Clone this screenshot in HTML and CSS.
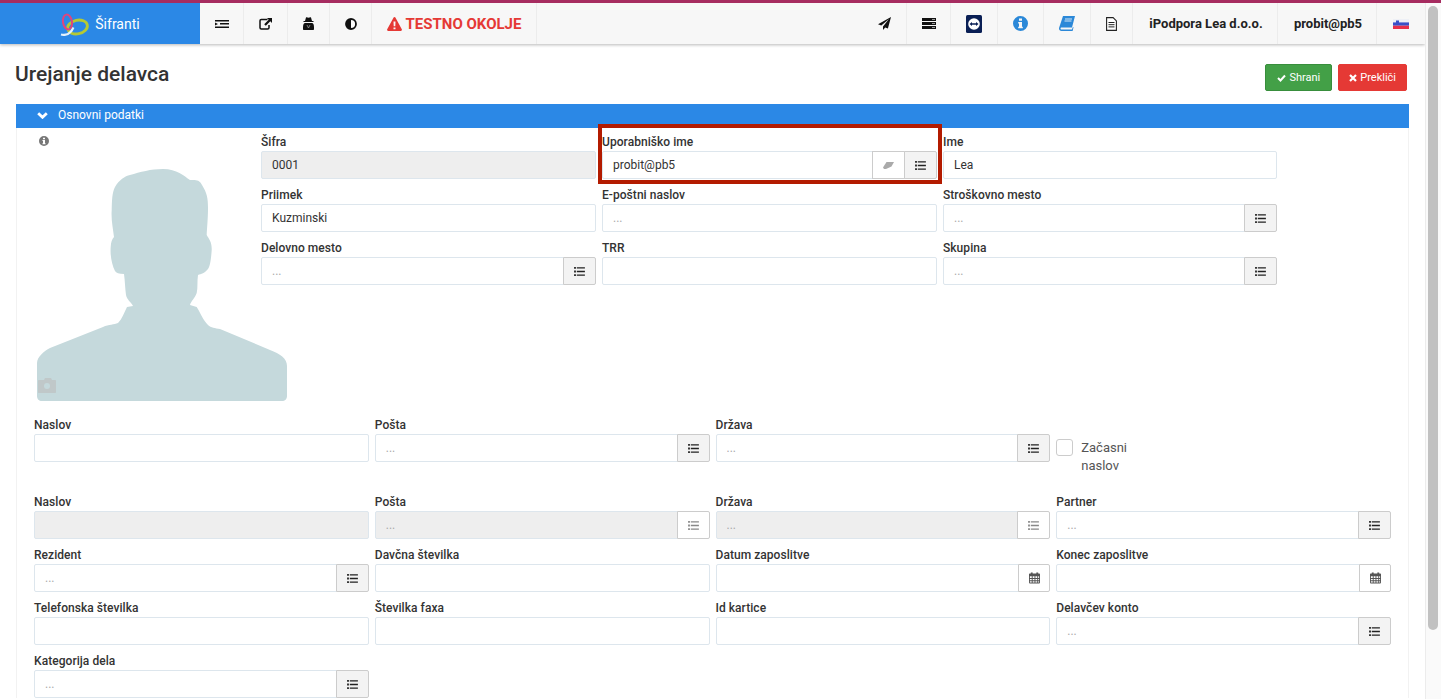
FILE: index.html
```html
<!DOCTYPE html>
<html lang="sl">
<head>
<meta charset="utf-8">
<title>Urejanje delavca</title>
<link rel="stylesheet" href="styles.css">
</head>
<body>
<svg class="defs" width="0" height="0" aria-hidden="true">
  <symbol id="i-list" viewBox="0 0 12 10">
    <path d="M0 0h2v2H0zM0 4h2v2H0zM0 8h2v2H0zM3 .2h9v1.600H3zM3 4.200h9v1.600H3zM3 8.200h9v1.600H3z"/>
  </symbol>
  <symbol id="i-cal" viewBox="0 0 12 12">
    <path fill-rule="evenodd" d="M2 0h2v1h4V0h2v1h1.200c.5 0 .8.300.8.800V11c0 .6-.4 1-1 1H1c-.6 0-1-.4-1-1V1.800C0 1.300.3 1 .8 1H2zM1 4v2h2V4zm3 0v2h2V4zm3 0v2h2V4zm3 0v2h1V4zM1 7v1.500h2V7zm3 0v1.500h2V7zm3 0v1.500h2V7zm3 0v1.500h1V7zM1 9.500V11h2V9.500zm3 0V11h2V9.500zm3 0V11h2V9.500zm3 0V11h1V9.500z"/>
  </symbol>
</svg>

<div class="strip"></div>
<div class="frame">
  <div class="page">
    <header class="navbar">
      <div class="brand">
        <svg class="logo" viewBox="0 0 30 24" width="30" height="24">
          <ellipse cx="17.500" cy="15" rx="10" ry="6.800" fill="none" stroke="#b5c934" stroke-width="2.800" transform="rotate(-12 17.500 15)"/>
          <ellipse cx="7.500" cy="10" rx="4.500" ry="7.500" fill="none" stroke="#e0457c" stroke-width="2" transform="rotate(-10 7.500 10)"/>
          <path d="M1 22.500c3 .8 7 .2 9.500-2.500 1.500-1.500 2-3 3-4.500" fill="none" stroke="#e4f2fc" stroke-width="2.200"/>
        </svg>
        <span>Šifranti</span>
      </div>
      <div class="tool w44">
        <svg width="14" height="8" viewBox="0 0 14 8"><path d="M0 0h14v1.500H0zM5 3h9v1.500H5zM0 6.500h14V8H0zM0 2.500 3 4 0 5.500z" fill="#111"/></svg>
      </div>
      <div class="tool w44">
        <svg width="13" height="12" viewBox="0 0 13 12"><path d="M8.500 1.500H2.300C1.500 1.500 1 2 1 2.800v7c0 .7.500 1.200 1.300 1.200h6.400c.8 0 1.300-.5 1.300-1.200V7" fill="none" stroke="#111" stroke-width="1.500"/><path d="M8 0h5v5l-1.700-1.700L6.800 7.800 5.200 6.200l4.500-4.500z" fill="#111"/></svg>
      </div>
      <div class="tool w42">
        <svg width="11" height="13" viewBox="0 0 11 13"><path d="M3 .5C4 0 4.500.8 5.500.8S7 0 8 .5L9 4h1.500v1H.500V4H2z" fill="#111"/><path d="M2 6h7c1 0 2 1.500 2 4v2c0 .6-.4 1-1 1H1c-.6 0-1-.4-1-1v-2c0-2.500 1-4 2-4z" fill="#111"/><path d="M4 8l1.500 3L7 8" fill="none" stroke="#999" stroke-width=".8"/></svg>
      </div>
      <div class="tool w42">
        <svg width="12" height="12" viewBox="0 0 12 12"><circle cx="6" cy="6" r="5" fill="#fff" stroke="#111" stroke-width="1.800"/><path d="M6 1a5 5 0 0 0 0 10z" fill="#111"/></svg>
      </div>
      <div class="tool warn">
        <svg width="15" height="14" viewBox="0 0 15 14"><path fill-rule="evenodd" d="M7.500 0c.4 0 .7.200.9.500l6.400 11.700c.4.800-.1 1.800-1 1.800H1.200c-.9 0-1.400-1-1-1.800L6.600.500C6.800.200 7.100 0 7.500 0zM6.500 4.500l.2 4.800h1.600l.2-4.800zm0 6v1.800h2v-1.800z" fill="#e53935"/></svg>
        <span>TESTNO OKOLJE</span>
      </div>
      <div class="nav-space"></div>
      <div class="tool w44">
        <svg width="13" height="13" viewBox="0 0 13 13"><path d="M13 0 0 7.300l3.300 1.300L11 2 5 9.500V13l2.200-2.600 2.700 1.100z" fill="#111"/></svg>
      </div>
      <div class="tool w44">
        <svg width="14" height="11" viewBox="0 0 14 11"><path d="M0 0h14v3H0zM0 4h14v3H0zM0 8h14v3H0z" fill="#111"/><path d="M10 1h3v1h-3zM10 5h3v1h-3zM10 9h3v1h-3z" fill="#999"/></svg>
      </div>
      <div class="tool w47">
        <svg width="16" height="18" viewBox="0 0 16 18"><rect width="16" height="18" rx="1.500" fill="#0a1f55"/><circle cx="8" cy="9" r="5.800" fill="#fff"/><path d="M3.500 9l2.500-2v1.300h4V7l2.500 2-2.500 2V9.700H6V11z" fill="#0a1f55"/></svg>
      </div>
      <div class="tool w46">
        <svg width="15" height="15" viewBox="0 0 15 15"><path fill-rule="evenodd" d="M7.500 0a7.500 7.500 0 1 1 0 15 7.500 7.500 0 0 1 0-15zM6 2.500v2.200h3V2.500zM5.200 6v1.500H6v3.300h-.8v1.500h4.600v-1.500H9V6z" fill="#2b88d8"/></svg>
      </div>
      <div class="tool w47">
        <svg width="16" height="15" viewBox="0 0 16 15"><path d="M4 0h12l-3 11.500H2.500C1.800 11.500 1.500 12 1.500 12.500s.4 1 1 1H13l.6-2 1-.500L13.600 15H2.500C1 15 0 14 0 12.500c0-.4 0-.7.200-1z" fill="#2b88d8"/><path d="M6 3h7M5.500 5h7" stroke="#fff" stroke-width=".8"/></svg>
      </div>
      <div class="tool w42">
        <svg width="11" height="14" viewBox="0 0 11 14"><path d="M.6.600h6.500l3.300 3.300v9.500H.6z" fill="#fff" stroke="#222" stroke-width="1.100"/><path d="M2.500 5.500h6M2.500 7.700h6M2.500 9.900h6" stroke="#222"/></svg>
      </div>
      <div class="tool text w145">iPodpora Lea d.o.o.</div>
      <div class="tool text w99">probit@pb5</div>
      <div class="tool w48 last">
        <svg width="16" height="10" viewBox="0 0 16 10"><rect width="16" height="3.400" fill="#eef0f6"/><rect y="3.400" width="16" height="3.300" fill="#3a50c8"/><rect y="6.700" width="16" height="3.300" fill="#e8304a"/><path d="M3 1.500h3v3L4.500 6 3 4.500z" fill="#3a50c8"/></svg>
      </div>
    </header>

    <main class="content">
      <div class="title-row">
        <h1>Urejanje delavca</h1>
        <div class="actions">
          <button class="btn btn-save" type="button">
            <svg width="9" height="8" viewBox="0 0 9 8"><path d="M1 4l2.500 2.500L8 1.500" fill="none" stroke="#fff" stroke-width="2"/></svg>
            Shrani
          </button>
          <button class="btn btn-cancel" type="button">
            <svg width="8" height="8" viewBox="0 0 8 8"><path d="M1 1l6 6M7 1 1 7" fill="none" stroke="#fff" stroke-width="2.200"/></svg>
            Prekliči
          </button>
        </div>
      </div>

      <section class="panel">
        <div class="panel-head">
          <svg width="11" height="7" viewBox="0 0 11 7"><path d="M1.200 1.200 5.500 5.300l4.300-4.100" fill="none" stroke="#fff" stroke-width="2.800"/></svg>
          <span>Osnovni podatki</span>
        </div>
        <div class="panel-body">
          <div class="top">
            <div class="photo">
              <svg class="info" width="10" height="10" viewBox="0 0 15 15"><path fill-rule="evenodd" d="M7.500 0a7.500 7.500 0 1 1 0 15 7.500 7.500 0 0 1 0-15zM6 2.500v2.200h3V2.500zM5.200 6v1.500H6v3.300h-.8v1.500h4.600v-1.500H9V6z" fill="#777"/></svg>
              <svg class="person" width="250" height="233" viewBox="0 0 250 233">
                <path d="M126 1C140 1 147 8 153 12C158 12 162 11 165 17C170 25 171 30 171 40C171 50 170 60 169.700 67C172 71 175 74 174.700 82C174 92 173 98 171 101C168 105 164 106 161 107C160 113 161 120 159.700 125C158 130 154 133 153 137L159.700 139C164 146 166 152 171 157C174 160 178 160 183 161L233 182C243 186 250 190 250 198V228C250 231 248 233 245 233H5C2 233 0 231 0 228V195C0 189 7 183 13 180L66 159C72 156 77 157 81 155C85 151 87 145 90 139L96 138C94 134 90 132 89 127C88 120 88 113 87 106C82 106 79 105 78 103C75 97 73 88 73.700 79C74 74 75 71 77 69C76 60 74 52 74.700 42C75 32 75 25 78 19C82 12 88 8 93 7C103 4 114 1 126 1z" fill="#c5d9dc"/>
                <path d="M4 212h3l1-2h6l1 2h3c.6 0 1 .4 1 1v11c0 .6-.4 1-1 1H2c-.6 0-1-.4-1-1v-11c0-.6.4-1 1-1z" fill="#bdbdbd" opacity=".6"/>
                <circle cx="10" cy="218" r="3" fill="#c5d9dc"/>
              </svg>
            </div>
            <div class="grid grid-3">
              <div class="field"><label>Šifra</label><input class="input" value="0001" disabled></div>
              <div class="field"><label>Uporabniško ime</label>
                <div class="group">
                  <input class="input" value="probit@pb5">
                  <span class="addon plain">
                    <svg width="11" height="7" viewBox="0 0 11 7"><path d="M3.500 0H11L8.500 4.500 3 7H1L0 5.500z" fill="#aaa"/></svg>
                  </span>
                  <span class="addon"><svg class="ico"><use href="#i-list"/></svg></span>
                </div>
              </div>
              <div class="field"><label>Ime</label><input class="input" value="Lea"></div>
              <div class="field"><label>Priimek</label><input class="input" value="Kuzminski"></div>
              <div class="field"><label>E-poštni naslov</label><input class="input" placeholder="..."></div>
              <div class="field"><label>Stroškovno mesto</label>
                <div class="group"><input class="input" placeholder="..."><span class="addon"><svg class="ico"><use href="#i-list"/></svg></span></div>
              </div>
              <div class="field"><label>Delovno mesto</label>
                <div class="group"><input class="input" placeholder="..."><span class="addon"><svg class="ico"><use href="#i-list"/></svg></span></div>
              </div>
              <div class="field"><label>TRR</label><input class="input"></div>
              <div class="field"><label>Skupina</label>
                <div class="group"><input class="input" placeholder="..."><span class="addon"><svg class="ico"><use href="#i-list"/></svg></span></div>
              </div>
            </div>
            <div class="highlight"></div>
          </div>

          <div class="grid grid-4">
            <div class="field"><label>Naslov</label><input class="input"></div>
            <div class="field"><label>Pošta</label>
              <div class="group"><input class="input" placeholder="..."><span class="addon"><svg class="ico"><use href="#i-list"/></svg></span></div>
            </div>
            <div class="field"><label>Država</label>
              <div class="group"><input class="input" placeholder="..."><span class="addon"><svg class="ico"><use href="#i-list"/></svg></span></div>
            </div>
            <div class="check-cell">
              <span class="check"></span>
              <span class="check-label">Začasni naslov</span>
            </div>

            <div class="field"><label>Naslov</label><input class="input" disabled></div>
            <div class="field"><label>Pošta</label>
              <div class="group"><input class="input" placeholder="..." disabled><span class="addon plain faded"><svg class="ico"><use href="#i-list"/></svg></span></div>
            </div>
            <div class="field"><label>Država</label>
              <div class="group"><input class="input" placeholder="..." disabled><span class="addon plain faded"><svg class="ico"><use href="#i-list"/></svg></span></div>
            </div>
            <div class="field"><label>Partner</label>
              <div class="group"><input class="input" placeholder="..."><span class="addon"><svg class="ico"><use href="#i-list"/></svg></span></div>
            </div>

            <div class="field"><label>Rezident</label>
              <div class="group"><input class="input" placeholder="..."><span class="addon"><svg class="ico"><use href="#i-list"/></svg></span></div>
            </div>
            <div class="field"><label>Davčna številka</label><input class="input"></div>
            <div class="field"><label>Datum zaposlitve</label>
              <div class="group"><input class="input"><span class="addon plain cal"><svg class="ico cal-ico"><use href="#i-cal"/></svg></span></div>
            </div>
            <div class="field"><label>Konec zaposlitve</label>
              <div class="group"><input class="input"><span class="addon plain cal"><svg class="ico cal-ico"><use href="#i-cal"/></svg></span></div>
            </div>

            <div class="field"><label>Telefonska številka</label><input class="input"></div>
            <div class="field"><label>Številka faxa</label><input class="input"></div>
            <div class="field"><label>Id kartice</label><input class="input"></div>
            <div class="field"><label>Delavčev konto</label>
              <div class="group"><input class="input" placeholder="..."><span class="addon"><svg class="ico"><use href="#i-list"/></svg></span></div>
            </div>

            <div class="field"><label>Kategorija dela</label>
              <div class="group"><input class="input" placeholder="..."><span class="addon"><svg class="ico"><use href="#i-list"/></svg></span></div>
            </div>
          </div>
        </div>
      </section>
    </main>
  </div>
  <div class="scrollbar"><div class="thumb"></div></div>
</div>
</body>
</html>
```

FILE: styles.css
```css
* { box-sizing: border-box; }

html, body {
  margin: 0;
  height: 100%;
  overflow: hidden;
}

body {
  font-family: Roboto, "Liberation Sans", sans-serif;
  font-size: 12px;
  color: #333;
  background: #fff;
  display: flex;
  flex-direction: column;
}

.defs { position: absolute; }

.strip {
  height: 3px;
  flex: none;
  background: #a62c60;
}

.frame {
  flex: 1;
  min-height: 0;
  display: flex;
}

.page {
  flex: 1;
  min-width: 0;
  overflow: hidden;
}

/* scrollbar */
.scrollbar {
  width: 16px;
  flex: none;
  background: #fafafa;
  border-left: 1px solid #ececec;
  padding: 3px 3px 0 2px;
}

.thumb {
  height: 624px;
  border-radius: 5px;
  background: #c1c1c1;
}

/* navbar */
.navbar {
  height: 41px;
  display: flex;
  background: #f7f7f7;
  box-shadow: 0 1px 3px rgba(0, 0, 0, .28);
  position: relative;
}

.brand {
  width: 200px;
  flex: none;
  background: #2b88e6;
  color: #fff;
  display: flex;
  align-items: center;
  justify-content: center;
  gap: 5px;
  font-size: 14px;
}

.logo { flex: none; }

.tool {
  flex: none;
  display: flex;
  align-items: center;
  justify-content: center;
  border-right: 1px solid #ececec;
}

.w42 { width: 42px; }
.w44 { width: 44px; }
.w46 { width: 46px; }
.w47 { width: 47px; }
.w48 { width: 48px; }
.w99 { width: 99px; }
.w145 { width: 145px; }
.last { border-right: 0; }

.warn {
  width: 165px;
  gap: 4px;
  color: #e53935;
  font-weight: 700;
  font-size: 15px;
}

.nav-space { flex: 1; }

.tool.text {
  padding-left: 2px;
  font-weight: 700;
  font-size: 13px;
  color: #222;
}

/* content */
.content { padding: 0 16px; }

.title-row {
  height: 60px;
  display: flex;
  align-items: flex-start;
  justify-content: space-between;
}

h1 {
  margin: 19px 0 0 -1px;
  font-size: 21px;
  line-height: 22px;
  font-weight: 500;
  color: #333;
}

.actions {
  display: flex;
  gap: 6px;
  margin: 20px 2px 0 0;
}

.btn {
  height: 27px;
  display: flex;
  align-items: center;
  gap: 3px;
  font: 400 11px Roboto, "Liberation Sans", sans-serif;
  color: #fff;
  border-radius: 2px;
  border: 1px solid transparent;
}

.btn-save {
  padding: 0 11px;
  background: #43a047;
  border-color: #388e3c;
}

.btn-cancel {
  padding: 0 10px;
  background: #e53935;
  border-color: #e53935;
}

.panel-head {
  height: 24px;
  background: #2b88e6;
  color: #fff;
  display: flex;
  align-items: center;
  gap: 10px;
  padding: 0 0 2px 21px;
  font-size: 12px;
}

.panel-body {
  border-left: 1px solid #f2f2f2;
  border-right: 1px solid #f2f2f2;
  padding: 5px 17px 0;
}

.top {
  display: flex;
  height: 283px;
  position: relative;
}

.photo {
  width: 227px;
  flex: none;
  position: relative;
}

.info {
  display: block;
  margin: 3px 0 0 5px;
}

.person {
  display: block;
  margin: 22px 0 0 3px;
}

.grid {
  display: grid;
  column-gap: 6px;
  row-gap: 7px;
  align-content: start;
}

.grid-3 {
  flex: none;
  width: 1016px;
  grid-template-columns: 335px 335px 334px;
}

.grid-4 { grid-template-columns: repeat(4, 1fr); }

.field { min-width: 0; }

.field label {
  display: block;
  height: 18px;
  line-height: 18px;
  font-weight: 500;
  font-size: 12px;
  letter-spacing: .05px;
  color: #333;
}

.input {
  display: block;
  width: 100%;
  height: 28px;
  min-width: 0;
  padding: 0 10px;
  border: 1px solid #dde6ed;
  border-radius: 2px;
  background: #fff;
  font: 400 12px Roboto, "Liberation Sans", sans-serif;
  color: #333;
  outline: 0;
}

.input:disabled {
  background: #eee;
  color: #333;
}

.input::placeholder { color: #aaa; }

.group { display: flex; }

.group .input {
  flex: 1;
  border-radius: 2px 0 0 2px;
}

.addon {
  flex: none;
  width: 33px;
  height: 28px;
  display: flex;
  align-items: center;
  justify-content: center;
  background: #f3f3f3;
  border: 1px solid #ccc;
  border-radius: 0 2px 2px 0;
  margin-left: -1px;
}

.addon.plain {
  background: #fff;
  border-radius: 0;
}

.addon.plain:last-child { border-radius: 0 2px 2px 0; }

.addon.cal { width: 32px; }

.addon.faded .ico { fill: #888; }

.ico {
  width: 11px;
  height: 9px;
  fill: #222;
}

.cal-ico {
  width: 11px;
  height: 12px;
  fill: #555;
}

.highlight {
  position: absolute;
  left: 564px;
  top: -9px;
  width: 344px;
  height: 60px;
  border: 4px solid #b31b00;
  pointer-events: none;
}

.check-cell {
  display: flex;
  gap: 8px;
  padding-top: 23px;
  height: 70px;
}

.check {
  width: 17px;
  height: 17px;
  flex: none;
  border: 1px solid #ccc;
  border-radius: 3px;
  background: #fff;
}

.check-label {
  width: 62px;
  font-size: 13px;
  line-height: 18px;
  color: #555;
}
```
